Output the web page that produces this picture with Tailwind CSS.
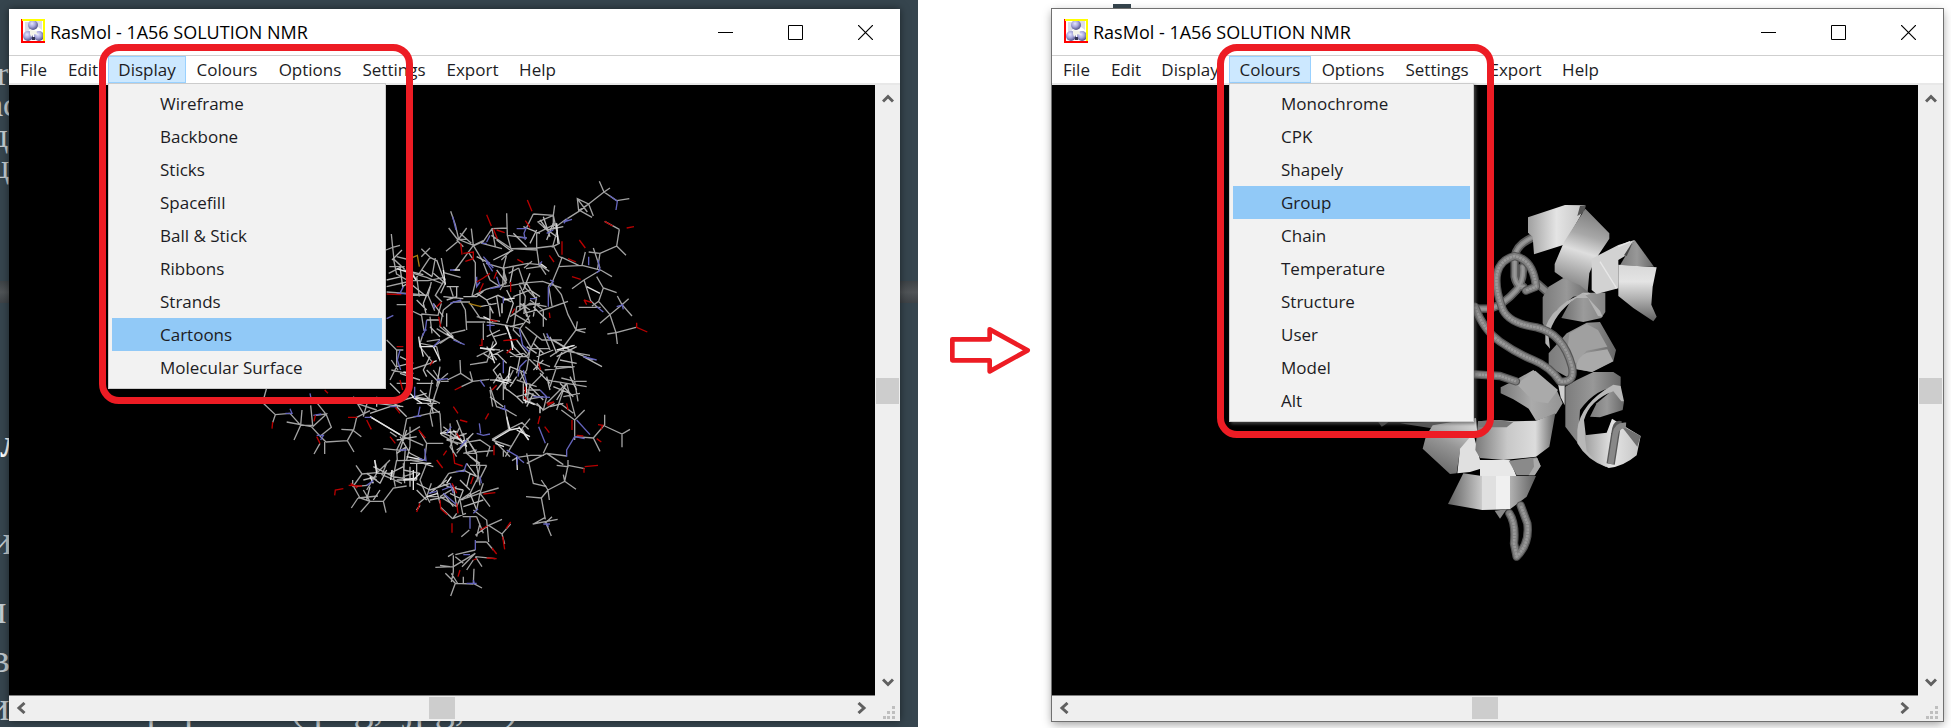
<!DOCTYPE html>
<html lang="en">
<head>
<meta charset="utf-8">
<title>RasMol</title>
<script src="https://cdn.jsdelivr.net/npm/@tailwindcss/browser@4"></script>
</head>
<body class="bg-white font-['Open_Sans','Noto_Sans',sans-serif] text-black">
<svg class="absolute size-0" aria-hidden="true">
  <defs>
    <radialGradient id="ball" cx="0.4" cy="0.35" r="0.65"><stop offset="0" stop-color="#e4e4ff"/><stop offset="0.5" stop-color="#a8a8dc"/><stop offset="1" stop-color="#55558c"/></radialGradient>
    <symbol id="logo" viewBox="0 0 24 24">
      <rect width="24" height="24" fill="#fff"/>
      <path d="M4 3h6v6l-5 6h-1zM16 2l5 0v9l-4-3z" fill="#dcdce8"/>
      <circle cx="12" cy="6" r="5" fill="url(#ball)"/>
      <circle cx="7" cy="17" r="5" fill="url(#ball)"/>
      <circle cx="18" cy="17" r="5" fill="url(#ball)"/>
      <path d="M9 11l6 1 2 4-4-1-3 3-1-3z" fill="#f4f4e8"/>
      <path d="M11 18h3v3h-3z" fill="#333350"/>
      <path d="M1 0V23H24" fill="none" stroke="#f00" stroke-width="2"/>
      <path d="M1 1H23V22" fill="none" stroke="#ff0" stroke-width="2"/>
    </symbol>
    <symbol id="chev-up" viewBox="0 0 12 10"><path d="M1 7.500L6 2.500l5 5" fill="none" stroke="#606060" stroke-width="3"/></symbol>
    <symbol id="chev-down" viewBox="0 0 12 10"><path d="M1 2.500L6 7.500l5-5" fill="none" stroke="#606060" stroke-width="3"/></symbol>
    <symbol id="chev-left" viewBox="0 0 10 12"><path d="M8.500 1L3 6l5.500 5" fill="none" stroke="#606060" stroke-width="3"/></symbol>
    <symbol id="chev-right" viewBox="0 0 10 12"><path d="M1.500 1L7 6l-5.500 5" fill="none" stroke="#606060" stroke-width="3"/></symbol>
    <symbol id="grip" viewBox="0 0 13 13"><path d="M9 0h3v3H9zM4 5h3v3H4zM9 5h3v3H9zM0 10h3v3H0zM4 10h3v3H4zM9 10h3v3H9z" fill="#bfbfbf"/></symbol>
    <symbol id="win-min" viewBox="0 0 15 15"><path d="M0 7.500h15" stroke="#000"/></symbol>
    <symbol id="win-max" viewBox="0 0 15 15"><path d="M.5.5h14v14H.5z" fill="none" stroke="#000"/></symbol>
    <symbol id="win-close" viewBox="0 0 15 15"><path d="M0 0l15 15M15 0L0 15" stroke="#000" stroke-width="1.200"/></symbol>
    <linearGradient id="g1"><stop offset="0" stop-color="#a0a0a0"/><stop offset=".5" stop-color="#e4e4e4"/><stop offset="1" stop-color="#c4c4c4"/></linearGradient>
    <linearGradient id="g2" x1=".6" y1="0" x2=".4" y2="1"><stop offset="0" stop-color="#7c7c7c"/><stop offset=".3" stop-color="#a8a8a8"/><stop offset=".5" stop-color="#dedede"/><stop offset="1" stop-color="#747474"/></linearGradient>
    <linearGradient id="g3" x1="0" y1="0" x2="0" y2="1"><stop offset="0" stop-color="#d8d8d8"/><stop offset=".3" stop-color="#e4e4e4"/><stop offset=".6" stop-color="#b0b0b0"/><stop offset="1" stop-color="#606060"/></linearGradient>
    <linearGradient id="g4"><stop offset="0" stop-color="#7c7c7c"/><stop offset=".5" stop-color="#989898"/><stop offset="1" stop-color="#686868"/></linearGradient>
    <linearGradient id="g5"><stop offset="0" stop-color="#7a7a7a"/><stop offset=".4" stop-color="#c8c8c8"/><stop offset=".75" stop-color="#dcdcdc"/><stop offset="1" stop-color="#666"/></linearGradient>
    <linearGradient id="g6"><stop offset="0" stop-color="#606060"/><stop offset=".38" stop-color="#c8c8c8"/><stop offset=".39" stop-color="#e0e0e0"/><stop offset=".54" stop-color="#e0e0e0"/><stop offset=".55" stop-color="#f0f0f0"/><stop offset=".7" stop-color="#f0f0f0"/><stop offset=".71" stop-color="#b0b0b0"/><stop offset="1" stop-color="#606060"/></linearGradient>
    <linearGradient id="g7" x1=".8" y1="0" x2=".3" y2="1"><stop offset="0" stop-color="#dcdcdc"/><stop offset=".5" stop-color="#969696"/><stop offset="1" stop-color="#666"/></linearGradient>
  </defs>
</svg>

<main class="grid h-screen grid-cols-[918fr_134fr_899fr] overflow-hidden">

  <!-- Left: wireframe view with the Display menu open -->
  <section class="relative mb-[2px] flex bg-[#36454e] pt-[9px] pr-[18px] pb-[6px] pl-[9px]">
    <div class="absolute inset-x-0 top-[281px] h-[22px] bg-gradient-to-b from-[#3e4347] via-[#505457] to-[#3e4347]"></div>
    <div class="absolute inset-0 overflow-hidden font-['Liberation_Serif',serif] text-[34px] leading-10 text-[#c4ccd0]" aria-hidden="true">
      <span class="absolute top-[54px] -left-[3px]">r</span>
      <span class="absolute top-[85px] -left-[12px]">ас</span>
      <span class="absolute top-[116px] -left-[9px]">д</span>
      <span class="absolute top-[147px] -left-[9px]">ц</span>
      <span class="absolute top-[424px] left-0 text-[40px] font-bold text-white">л</span>
      <span class="absolute top-[521px] -left-[9px] text-[40px]">и</span>
      <span class="absolute top-[590px] -left-[15px] text-[40px]">п</span>
      <span class="absolute top-[639px] -left-[9px] text-[40px]">в</span>
      <span class="absolute top-[687px] -left-[12px] text-[40px] whitespace-nowrap">ическом формате (.png, .jpg, ...)</span>
    </div>

    <div class="relative flex min-w-0 flex-1 flex-col bg-white shadow-[0_0_8px_rgba(0,0,0,0.5)]">
      <header class="flex h-[46px] shrink-0 items-center pl-3">
        <svg class="mt-[-2px] size-6"><use href="#logo"/></svg>
        <h1 class="ml-[5px] flex-1 text-[18px] leading-6">RasMol - 1A56 SOLUTION NMR</h1>
        <button class="flex h-full w-[70px] items-center justify-center" aria-label="Minimize"><svg class="size-[15px]"><use href="#win-min"/></svg></button>
        <button class="flex h-full w-[70px] items-center justify-center" aria-label="Maximize"><svg class="size-[15px]"><use href="#win-max"/></svg></button>
        <button class="flex h-full w-[70px] items-center justify-center" aria-label="Close"><svg class="size-[15px]"><use href="#win-close"/></svg></button>
      </header>
      <nav class="relative flex h-[30px] shrink-0 items-start border-t border-b-2 border-t-[#cfcfcf] border-b-[#e8e8e8] text-[17px] leading-[26px] text-[#1c1c24]">
        <button class="h-[27px] w-[49px]">File</button>
        <button class="h-[27px] w-[50px]">Edit</button>
        <div class="relative">
          <button class="h-[27px] w-[78px] border border-[#99d1ff] bg-[#cce8ff] leading-6" aria-expanded="true">Display</button>
          <ul class="absolute top-[27px] left-0 z-10 w-[278px] border border-[#ccc] bg-[#f2f2f2] px-[3px] pt-[3px] pb-1">
            <li><button class="h-[33px] w-full pl-12 text-left">Wireframe</button></li>
            <li><button class="h-[33px] w-full pl-12 text-left">Backbone</button></li>
            <li><button class="h-[33px] w-full pl-12 text-left">Sticks</button></li>
            <li><button class="h-[33px] w-full pl-12 text-left">Spacefill</button></li>
            <li><button class="h-[33px] w-full pl-12 text-left">Ball &amp; Stick</button></li>
            <li><button class="h-[33px] w-full pl-12 text-left">Ribbons</button></li>
            <li><button class="h-[33px] w-full pl-12 text-left">Strands</button></li>
            <li><button class="h-[33px] w-full bg-[#91c9f7] pl-12 text-left">Cartoons</button></li>
            <li><button class="h-[33px] w-full pl-12 text-left">Molecular Surface</button></li>
          </ul>
        </div>
        <button class="h-[27px] w-[82px]">Colours</button>
        <button class="h-[27px] w-[84px]">Options</button>
        <button class="h-[27px] w-[84px]">Settings</button>
        <button class="h-[27px] w-[73px]">Export</button>
        <button class="h-[27px] w-[57px]">Help</button>
      </nav>
      <div class="flex min-h-0 flex-1">
        <svg class="min-w-0 flex-1 border-b border-[#808080] bg-black" viewBox="0 0 866 610" preserveAspectRatio="xMidYMid meet" role="img" aria-label="Wireframe model">
          <g transform="translate(221 85) scale(.33333)" fill="none" stroke-width="4">
            <path stroke="#a2a2a2" d="M1108 34l14 32 18-12M1122 66l38 26M1122 66l-46 36-34-16 4 36 30-20 14 36M1076 102l-26 20 36 20M1042 86l30 40M1160 92l38-6M1050 122l-38 24M1168 178l-8 50-50 22M1160 228l28 28M1168 178l-44-24M1110 250l-34-4M1110 250l-8 50M1090 234l20 60M1066 246l-10 40-70 4M1056 286l56 14 34 20M1112 300l-50 30-36 26M1062 330l20 62 20 20M1100 320l20 34 40 14M1120 354l-14 40-20 14M1106 394l34 40 36-30M1046 412l66 0M1140 434l-30 26M1140 434l18 54 60-16M1158 488l4 34M1158 488l-26 4M1176 404l30 34M1176 404l-14-26M1176 404l20-18
              M910 132l60 4 0 40 40-30M970 136l4-30M970 136l-46 20 34 30M910 132l-20 40M970 136l18 84-20 10 14-50M920 190l0 50-76-4-60-40M920 190l60-30M830 130l2 66 12 44-30 30M832 174l-46 2-30 44 60 16M832 196l58 8M786 176l10 54M844 236l76-2 50-6M920 234l8 56-40 6M970 228l16 30 10 6M928 284l-34-4-72 14 4 50M928 284l30 20M928 284l20 30M986 290l-20 48-10 10 10 60M986 290l10-28 50 24M966 338l28 36 20 60 24 46-40 54M994 354l-56-20-70 6M1014 394l-56 20-30 10M1038 480l30-4M1038 480l28 8M1038 480l4-26
              M662 124l14 40 10 44 24 0M686 208l44 18 30-14M656 174l28 36M648 244l36-30M710 174l-26 36M730 226l-6-50M730 226l-54 74M730 226l30 50M690 190l34 30M700 230l-20-20M716 248l20 30 0 60-10 40M760 214l-30 14M768 280l50 14 12 36-20 30M822 294l-4 50-50 14-40 20M760 280l20 50 30 20M820 294l10-40M866 294l20 60 30 30M836 310l30-16M866 340l20 40-4 50M820 350l60-10M882 294l24-20
              M484 192l4 40-20 8M488 232l22-6M488 232l4 36 32 30M478 290l46 0M490 264l10 50M476 310l40-20M500 312l34 20 60 0 50-10M600 234l-26 26M574 236l26 26M600 262l-40 60M600 262l20 10M634 264l8 44 50 14M606 320l10-56M560 320l8 60M530 330l0 40M470 350l60-14M470 366l80 6 44 4M594 376l20 46M594 376l-50 0M594 376l10-40M550 310l40 12 50 20M646 326l-30 50 20 20M560 330l-30-44M500 260l40 10M530 404l-30 0M574 432l50 4 10-36M574 432l8 50M540 420l34 16M640 420l-10 50 24 20 6 14M640 420l30-24 50 0M670 380l-10-30M690 390l16 30 4 60M710 456l56 0M720 400l30 44 60 10M706 480l-44 10M660 500l34 20M660 500l-46 26M660 500l-30 20M660 500l-40-24M600 440l6 50M580 490l-10 30 50 10M620 530l10 44M570 530l40 50M590 514l40-6
              M470 510l30 30 0 50-20 40M500 540l20 0M484 600l46 10M484 570l20 30M500 640l46 0M540 600l60-20M610 600l20 30 24-20M630 630l-20 60 20 10M606 630l-10 60M632 634l24 0M690 570l2 40 36 24 50-6M692 610l-40 20M728 634l-34 16M728 634l-8-30M780 630l40 0M780 650l20 60 26 8M790 640l20-30M780 660l8 50
              M740 560l40-20M720 584l50-8M750 534l60 6M790 514l-20 64M780 480l20 40M770 456l60 10 20 66M740 440l60 14M760 460l0 50M830 466l40 10 34 60M870 476l30-40M900 536l60 0M860 410l-10 70 20 20M850 430l50 30M840 440l60-40 50 10M880 400l20 60M900 390l40 30 0 50M930 400l-70 10M886 470l50 40 60 0M940 490l20 50M920 500l-30 60M950 500l50 30 40 20M960 560l30-20 90 16M1000 536l30-10M1004 530l-30 60 50 0M980 590l-20 60M960 590l-50-20M1020 540l14 90M1034 590l-90 10M1034 634l-40-10M1034 634l36 0M1034 634l10 60M1010 640l-60-10M1010 640l60 10M1010 640l-60 60M1010 640l26 100M1000 660l-20 60M1000 680l50-10M990 700l40 30M1034 750l30-30M1034 750l0 60M1034 750l-40-30M1090 804l34-40 0-30M1090 804l20 40M1090 804l-56-4M1124 768l52 24 24-14M1176 792l0 40
              M900 540l-10 60-20 30M880 550l60 60-40 40M860 630l60 20M900 640l-10 60M930 660l-40 0M940 680l-60 10M890 690l40 20M950 680l-10 40 34-20M820 630l0 60M850 600l-30 60
              M826 718l34 20M826 718l10 60 40-20 20 20M836 778l-50 30M876 776l-30 50-20 34M876 776l24-30M876 776l20 34M846 830l-60-20M790 810l50 50M820 860l0-20M862 862l-16 10M862 862l40-6 40 0M890 850l20 90 40 10M950 850l-60 30M950 850l60 8M950 850l50 34M940 850l14-30M1014 870l0 20-34-4M1014 886l-10 48-50 26M1014 886l50 10M1004 934l34 24M1004 934l-4-20M954 960l4 30M954 960l-20 24-46-4M954 960l-20-30M934 984l12 64M908 1062l75-14M948 1060l16 38M910 1062l36-20M966 1040l-20 20
              M100 700l36 34 44-4M100 690l10-36M136 734l-8 24M180 730l32 36-20 44M212 766l36 0-6-60M170 756l74 14M212 766l4-46M244 770l28 30 16 16M288 732l16 40-30 24M288 732l-30 4M262 700l24 30M248 770l44-40M288 816l64-4 20 34M352 812l20-36 8-34M368 780l-34-2M368 780l26 20M284 816l0 36M270 820l-18 32M380 742l40-20M400 730l-30-50M420 740l100 60M400 740l14-50M380 700l60 20M530 746l70-16 30-6M530 746l-10 50M600 730l8 40M600 730l14-50M520 800l-20 40 2 32 82-2M520 800l60 26M520 800l50-30M540 770l0 60M500 800l-20-14M460 836l60 6M526 834l-6 90M584 870l6-50 50 0M590 820l-20-34M630 730l4 64 50 30M650 780l-16 10M660 760l4 60M680 750l20 50M690 770l-30 60 20 30M690 820l60-10 30 20-10 30M690 820l-40-10M700 850l40-10M740 850l-30 0 40 36-10 50M740 846l50-4M710 804l30 50 0 40M720 800l-40 50
              M396 912l44-4M396 912l-26 36 20 36 30 10M396 912l-18-26M434 870l10 40 46 0M480 870l-40 40M440 910l-30 50M470 880l-14 34 60 26M368 950l44-4M368 950l0-20M420 994l40 0 30-40 40-6M460 994l8 34M420 994l-28 32M384 984l-20 30M384 984l60-6M400 960l20 34M486 900l10 50M500 870l-10 50 60 10M520 920l30-10M524 940l-4-60M590 880l-20 50 20 50 34 0M590 880l-50-10M590 980l-24 20M590 980l14-40M590 980l10 18M630 980l50-30M630 980l50 30M656 910l-20 30 20 10M656 910l50-10M740 930l-20 40M740 886l10 60M770 886l-50 0M770 886l-20 40M750 970l-60 20M750 970l56-16M750 970l30 40M750 970l-10 50M750 970l10-30M690 990l10 50 40 0M690 990l30-20M680 1030l-10 14M668 1046l40-16M668 1046l-36-34M730 1020l40 30 6 66M776 1066l40-18M776 1066l-40 30M776 1066l40 26 26-30M816 1092l8 30M770 1116l-34 0M770 1116l20 24M718 1080l-24 20M740 1040l20 50M740 1100l10-40M736 1140l-60 14M736 1150l-40 40M736 1160l60 6M670 1156l0 50-6 30M670 1190l66-40M670 1190l-54 2M670 1150l-16 10M660 1190l-30-4M676 1240l54 2M676 1240l-14 38M676 1240l-30-30M730 1240l2-44M730 1240l26 14M664 1210l20 32M736 1160l20 30M730 1170l-20 30M676 1160l24 20M700 1240l0-20"/>
            <path stroke="#b4b4b4" d="M470 330l44-10M510 290l8 60 30-20M486 270l30-30M520 300l60 14M540 340l50 40M576 300l30 20M620 270l22 60M610 310l36 30-14 30M650 350l36 0M680 350l0 30-30 10M640 380l60 6M600 350l-20 50 8 30M560 390l30 30M610 400l30 40M590 450l40 0M600 470l30 30M640 470l30 30M650 430l0 40M700 380l40 0 20-16M740 370l30 20 20 40M770 390l34-14 40 20M780 400l0 60M750 410l50-10M800 380l10 60M830 360l20 40-20 60M850 380l50-20 30 20M870 360l0 60M890 340l30 50M900 310l-20 50M850 290l-10 50M800 300l30 40M790 270l60-30M740 260l40 20M800 210l40 30M850 190l40 40M880 170l50 20M930 150l30 40M940 170l40 30M950 210l20-50M940 140l20 60M1000 170l-50 10M900 220l20-40
              M880 430l40-10 20 20M890 440l-10-40M910 410l40 40M920 380l-10 60M870 400l30 20M840 470l40-10M810 480l-40 20M790 500l40-10M770 530l30 40M780 560l40-20M760 550l30 20M800 550l30 30M810 580l-20 20 20 30M830 540l30 20 30 0M850 530l30 30M860 510l30 40M840 560l40-10M870 560l-10 50M890 530l30 20M910 520l30 30M920 560l50-20M930 540l-10 60M940 570l-30 30M960 500l20 50M970 510l50 30M980 560l60-30M1060 560l56 30M1040 550l50 20M990 570l50 10M950 620l10 40M930 610l30 30M970 650l50 20M1020 620l20 40M990 640l40 40M980 690l30-50M960 710l40-10
              M800 620l50 20M810 610l20 50M840 610l-40 50M860 620l-20 30M870 600l20 50M880 640l0 50M860 680l40-10M900 650l40 40M910 670l-20 40M920 700l20 20M880 660l40 20M840 590l50 20M820 650l40 30 20 20M780 680l40 30
              M510 560l40 20M500 590l40-10M540 560l0 60M510 610l60 20M560 640l50 0M570 660l30 30 10 40M550 680l60 10M520 690l70-20M590 700l40 30M560 700l60 0M480 640l30 30M470 690l40 20M440 700l80 10M420 730l60-20M500 710l30 30M440 680l0 30M620 650l10-60M590 600l40 40M600 560l-20 40 10 20
              M640 790l50 20M650 810l60-20M660 800l10 50M670 780l40 50M680 840l30-20M700 790l10 60M720 820l20 30M730 790l-30 30M640 770l50 40M720 860l30 20M710 880l30 40M700 900l40 20M720 910l-10 40M690 930l30 30M650 950l50 10M640 970l30 40M660 970l40 20M670 950l10 60M700 960l-20 50M710 980l40-20M720 970l20 50M700 1010l60-20M650 930l-50 40M600 960l60-20M620 960l10 40M600 990l50-10M560 960l30 30M560 940l40 20M540 890l0 60M560 880l0 50M520 900l50 10M500 930l60 0M480 910l40-20M470 900l-20 40M430 890l60 30M440 930l-30-20M410 910l40 30M420 950l-10 40M450 960l-20 30M400 930l40-10M510 800l30 50 40 20M530 780l-20 60M560 800l-60 10M500 850l30-20M530 870l10-40M540 880l60 0M580 880l30 10"/>
            <path stroke="#e4e4e4" d="M500 296l44 14 14 20M640 300l6 44M566 500l4 30 46 0M570 520l10 40M600 580l20-8M540 670l14 14 50 10M520 606l30 4M546 680l30 20M820 390l34-6M816 400l0 30M800 520l-20 20 14 40M750 534l44 6M830 470l20 60M820 630l24 0M840 590l-6 40M836 640l-40-10M830 740l10 40M790 810l50-30 30-6M796 820l26 10M630 790l50-6M680 800l20 20M434 870l6 40M486 900l-4 30M550 900l0 60M520 930l40-6M420 920l10 20M590 880l14 0M570 910l-20 20M560 1020l10-14M590 980l34-10M980 160l4 60M930 280l20 14M980 540l54-14M880 690l34 14M860 860l2 40M930 710l0 20M760 440l30 14M1070 350l40 20M700 810l10 20M670 300l20 0M664 920l-14 20M866 770l30 40M860 780l40 20M650 490l20 14M610 530l20 40M780 540l10 30M826 466l14 30M842 500l6 40M890 640l-4 60M420 740l90 54M530 860l50 10"/>
            <path stroke="#6464bc" d="M1140 78l22 16-4 26M1012 146l-10 14M1000 156l26-8M950 190l20-10M890 204l-20-2M890 170l-8 20 4 20M860 176l26 0M770 216l10-20M756 220l14 0M668 140l10 40M1110 300l-10 8M1076 286l0-26M1110 300l-6-30M960 330l10 4-10 16M955 350l0 60M928 284l8-10M740 320l0 30 10-14M768 274l20 30M800 320l10 30-30 6M760 260l30 34M660 300l14 0M610 400l4 16M520 350l-10 20M470 446l20-10M590 450l-4 30-10 20M580 480l10 0M610 530l20-20M670 510l34 14M660 400l34-10M500 370l50 2M510 540l-8 30 10 30M620 630l34-4M554 650l0 34M770 466l24 0M780 460l0 20M820 380l0 20M900 386l20 0M868 476l10 50 20 20M890 570l-20 20-6 30M820 570l0 40M880 600l10 40M910 680l50 2M930 660l20 20M950 490l10 20M1060 560l40 10M1180 404l-20 6M1176 404l4 14M1100 410l20 16M750 630l14 20M824 720l0-14M810 714l20 6M926 770l20 50M1034 800l30 6M1034 800l-24 40 0 20M1040 750l40 44M862 862l20 16M862 860l0 24M940 1062l20 0M948 1060l8 10M166 730l20 0-6-14M240 670l4 20M260 796l20 0-8 14M250 736l24-4M404 742l20 0M480 710l20 0M564 740l6-30M550 740l24-2M510 840l20 0M584 836l4 36-20-6M650 790l14-20M740 790l20 6 20-4M752 790l-4-30M706 890l-4 14-24 0M706 890l4-10M636 960l36-14M640 970l40 34M660 940l10 30M750 920l4 20M730 1030l14-14M720 1040l0 36M736 1110l0 30M700 1154l20 0M710 1240l30 0M730 1230l4 14M410 946l20-14M596 970l24-6M690 830l20-20M830 840l34 20"/>
            <path stroke="#b80000" d="M892 90l14 34M886 152l14 20M770 134l14 34M790 176l12 30M800 180l24 8M692 220l4 34M700 250l30-4 0 20-24 8M1124 154l24 14M1190 174l22-4M1048 210l18 24M996 214l0 40M958 256l14 20M1014 266l24 10M1026 320l26 8M1062 390l24 8M1070 404l-8-14M1220 458l0 14 32 14M958 428l2 16M862 268l18 10M842 336l0 30M780 310l-20 14-20 12M760 340l-12 26M800 306l-8 20M620 410l14-14M626 440l6 30M470 372l44 2M500 530l20 0M600 586l10-14M510 630l8 30M674 660l20-10M786 660l14-14M780 450l22 4M756 506l0 20-8 0M820 512l42-4M830 550l14-14M846 430l8-14M926 580l6 20M886 650l0 20M884 680l6 10M930 738l-6 24M950 700l22-4-20 10M944 770l14 18M1010 700l4 20M1026 750l0 30M1040 796l20 2M1100 806l14 10M1104 764l14 2-6 12M1064 890l40-4M1062 894l0 14M670 710l14 20M690 750l22 6M776 730l-10 18M792 826l0 30M640 856l10-14M670 850l4 30 24 8M680 790l10 14M566 780l20 24M480 800l16 20M620 870l18 24M496 712l14 18M410 750l14 28M354 742l28 0M284 660l10 10M256 736l-4 18M260 800l10 20M128 756l-2 20M314 976l2-16 24-4M356 946l40 2M362 940l20 14M570 1000l-10 26M630 990l2 26 20 18M680 1000l4 30M666 1060l0 28M730 920l-8 22M760 972l36-4M666 940l14 30M750 1080l22-12M842 1056l-14 20M818 1100l6 38M786 1134l14 18M770 1164l30 2M690 1200l-6 20M730 1170l10-4"/>
            <path stroke="#a87c10" d="M548 262l14-6 6 34M716 400l22 6 16 4"/>
          </g>
        </svg>
        <div class="flex w-[25px] shrink-0 flex-col items-center bg-[#efefef] px-px pt-[5px] pb-[5px]">
          <button class="p-1" aria-label="Scroll up"><svg class="h-[10px] w-3"><use href="#chev-up"/></svg></button>
          <div class="flex w-full flex-1 flex-col justify-center"><div class="h-[26px] bg-[#cdcdcd]"></div></div>
          <button class="p-1" aria-label="Scroll down"><svg class="h-[10px] w-3"><use href="#chev-down"/></svg></button>
        </div>
      </div>
      <div class="flex h-[25px] shrink-0 items-center bg-[#efefef] pr-1 pb-px pl-[3px]">
        <button class="p-1" aria-label="Scroll left"><svg class="h-3 w-[10px]"><use href="#chev-left"/></svg></button>
        <div class="flex h-full flex-1 justify-center py-px"><div class="w-[26px] bg-[#cdcdcd]"></div></div>
        <button class="p-1" aria-label="Scroll right"><svg class="h-3 w-[10px]"><use href="#chev-right"/></svg></button>
        <svg class="mt-2 ml-3 size-[13px]"><use href="#grip"/></svg>
      </div>
    </div>
    <div class="pointer-events-none absolute top-[44px] left-[99px] z-20 h-[360px] w-[314px] rounded-[20px] border-[7px] border-[#ed1c24]"></div>
  </section>

  <!-- Arrow between the two steps -->
  <div class="flex items-center justify-center pb-[28px] pl-3">
    <svg class="h-[70px] w-[110px]" viewBox="0 0 330 210" role="img" aria-label="Next step"><path d="M49 70H161V40L275 103 161 166V133H49Z" fill="#fff" stroke="#ed1c24" stroke-width="14" stroke-linejoin="round"/></svg>
  </div>

  <!-- Right: cartoon view with the Colours menu open -->
  <section class="relative flex pt-[9px] pr-[8px] pb-[8px]">
    <div class="absolute top-1 left-[61px] h-[5px] w-[18px] bg-[#36454e]"></div>
    <div class="relative flex min-w-0 flex-1 flex-col bg-white shadow-[0_0_0_1px_#707070,0_3px_9px_rgba(0,0,0,0.4)]">
      <header class="flex h-[46px] shrink-0 items-center pl-3">
        <svg class="mt-[-2px] size-6"><use href="#logo"/></svg>
        <h1 class="ml-[5px] flex-1 text-[18px] leading-6">RasMol - 1A56 SOLUTION NMR</h1>
        <button class="flex h-full w-[70px] items-center justify-center" aria-label="Minimize"><svg class="size-[15px]"><use href="#win-min"/></svg></button>
        <button class="flex h-full w-[70px] items-center justify-center" aria-label="Maximize"><svg class="size-[15px]"><use href="#win-max"/></svg></button>
        <button class="flex h-full w-[70px] items-center justify-center" aria-label="Close"><svg class="size-[15px]"><use href="#win-close"/></svg></button>
      </header>
      <nav class="relative flex h-[30px] shrink-0 items-start border-t border-b-2 border-t-[#cfcfcf] border-b-[#e8e8e8] text-[17px] leading-[26px] text-[#1c1c24]">
        <button class="h-[27px] w-[49px]">File</button>
        <button class="h-[27px] w-[50px]">Edit</button>
        <button class="h-[27px] w-[78px]">Display</button>
        <div class="relative">
          <button class="h-[27px] w-[82px] border border-[#99d1ff] bg-[#cce8ff] leading-6" aria-expanded="true">Colours</button>
          <ul class="absolute top-[27px] left-0 z-10 w-[245px] border border-[#ccc] bg-[#f2f2f2] px-[3px] pt-[3px] pb-1 shadow-[2px_2px_3px_rgba(90,90,90,0.7)]">
            <li><button class="h-[33px] w-full pl-12 text-left">Monochrome</button></li>
            <li><button class="h-[33px] w-full pl-12 text-left">CPK</button></li>
            <li><button class="h-[33px] w-full pl-12 text-left">Shapely</button></li>
            <li><button class="h-[33px] w-full bg-[#91c9f7] pl-12 text-left">Group</button></li>
            <li><button class="h-[33px] w-full pl-12 text-left">Chain</button></li>
            <li><button class="h-[33px] w-full pl-12 text-left">Temperature</button></li>
            <li><button class="h-[33px] w-full pl-12 text-left">Structure</button></li>
            <li><button class="h-[33px] w-full pl-12 text-left">User</button></li>
            <li><button class="h-[33px] w-full pl-12 text-left">Model</button></li>
            <li><button class="h-[33px] w-full pl-12 text-left">Alt</button></li>
          </ul>
        </div>
        <button class="h-[27px] w-[84px]">Options</button>
        <button class="h-[27px] w-[84px]">Settings</button>
        <button class="h-[27px] w-[73px]">Export</button>
        <button class="h-[27px] w-[57px]">Help</button>
      </nav>
      <div class="flex min-h-0 flex-1">
        <svg class="min-w-0 flex-1 border-b border-[#808080] bg-black" viewBox="0 0 866 610" preserveAspectRatio="xMidYMid meet" role="img" aria-label="Cartoon model">
          <g transform="translate(348 105) scale(.33333)">
            <!-- back coils -->
            <g fill="none" stroke-linecap="round" stroke-linejoin="round">
              <path d="M408 138Q350 160 344 200V260Q350 290 370 290M368 230Q372 270 350 300Q310 345 270 356H225M412 280L440 305" stroke="#585858" stroke-width="25"/>
              <path d="M408 138Q350 160 344 200V260Q350 290 370 290M368 230Q372 270 350 300Q310 345 270 356H225M412 280L440 305" stroke="#888" stroke-width="15"/>
              <path d="M408 138Q350 160 344 200V260Q350 290 370 290M368 230Q372 270 350 300Q310 345 270 356H225" stroke="#999" stroke-width="6"/>
            </g>
            <!-- upper right helix -->
            <path d="M384 82L495 45 555 46 540 80 492 164 402 193 398 140 384 128Z" fill="url(#g1)"/>
            <path d="M540 48L558 46 552 66 532 78Z" fill="#555"/>
            <path d="M556 56L628 130V146L584 212 568 250 562 316 464 246V222L492 156Z" fill="url(#g2)"/>
            <path d="M575 206L655 165 704 150 680 195 655 210V295L590 312 575 300Z" fill="#d2d2d2"/>
            <path d="M600 215L650 295M655 170L690 155" stroke="#e8e8e8" stroke-width="4"/>
            <path d="M704 150L762 230 660 226Z" fill="url(#g4)"/>
            <path d="M672 196L700 152 690 176 680 198Z" fill="#444"/>
            <path d="M655 224L770 232 758 290 754 344 770 380 760 394 700 354 655 318Z" fill="url(#g3)"/>
            <!-- middle helix turns -->
            <path d="M428 322L446 290 490 264 540 286 572 312 520 320 470 360 436 414 428 400Z" fill="url(#g4)"/>
            <path d="M484 384L508 340 548 308H616V366L604 384 550 396Z" fill="url(#g1)" opacity=".68"/>
            <path d="M436 412Q450 370 500 334L550 308 600 362 608 380 594 378 564 324 530 324Q460 370 446 440L450 476 436 460Z" fill="#b4b4b4"/>
            <path d="M446 490L500 430 560 398 600 396 648 480 640 514 576 546 528 538 500 560 446 530Z" fill="url(#g4)"/>
            <path d="M508 430L560 402 594 420 622 470 560 482 528 520 500 500Z" fill="#a0a0a0"/>
            <path d="M528 536Q530 500 560 488L622 478 640 514 576 546Z" fill="#aaa"/>
            <path d="M474 582L494 584V646L482 622Z" fill="#d0d0d0"/>
            <path d="M496 590L530 570 580 546 640 546 662 560V590Q590 590 540 660L534 760 496 710Z" fill="url(#g4)"/>
            <path d="M570 680L590 640 650 590 672 635 668 660 600 682Z" fill="url(#g4)"/>
            <path d="M662 588L640 584Q540 640 532 720V760Q560 810 620 832L560 760 552 690Q570 630 640 604L664 634 672 634Z" fill="#b8b8b8"/>
            <path d="M554 736L620 728 636 686 722 738 710 796Q670 830 626 834 590 820 560 784Z" fill="url(#g1)"/>
            <path d="M660 704L722 738 712 770 676 724Z" fill="#707070"/>
            <path d="M632 822L646 732Q650 700 660 706" stroke="#585858" stroke-width="25" fill="none"/>
            <path d="M632 822L646 732Q650 704 678 706" stroke="#888" stroke-width="17" fill="none"/>
            <!-- lower left helix turns -->
            <path d="M302 592L346 570 400 540 470 600 488 640 468 672 408 692 386 656 340 628 302 610Z" fill="url(#g1)" opacity=".75"/>
            <path d="M350 582L406 542 474 600 444 640 400 634Z" fill="#aaa"/>
            <path d="M0 700L222 690 226 708 90 714Z" fill="#555"/>
            <path d="M78 738L98 706 228 684 232 730 180 780 170 850 150 852 68 776Z" fill="url(#g7)"/>
            <path d="M172 850L180 776 220 730 240 810 242 836 210 846Z" fill="#e0e0e0"/>
            <path d="M234 694L290 690 340 694 408 692 466 670 448 770 408 800 310 810 240 804 226 780Z" fill="url(#g5)"/>
            <path d="M234 694L290 690 340 696 320 712 236 712Z" fill="#777"/>
            <path d="M240 810H330L350 860H240Z" fill="#e8e8e8"/>
            <path d="M326 812L410 802 422 828 404 856H350Z" fill="#8a8a8a"/>
            <path d="M400 806L412 804 422 828 404 856H386L402 830Z" fill="#aaa"/>
            <path d="M190 850L246 858H408L380 920 330 958 246 960 144 942Z" fill="url(#g6)"/>
            <path d="M284 962L320 958 300 986Z" fill="#888"/>
            <!-- front coils -->
            <g fill="none" stroke-linecap="round" stroke-linejoin="round">
              <path d="M225 350Q250 420 300 455T400 510T480 574Q526 580 516 530Q490 430 410 412Q320 400 305 350Q260 220 344 198Q400 210 408 290L378 302M225 553L300 558 348 574M328 970Q348 1000 342 1060L350 1100Q390 1060 382 1000L362 946" stroke="#555" stroke-width="25"/>
              <path d="M225 350Q250 420 300 455T400 510T480 574Q526 580 516 530Q490 430 410 412Q320 400 305 350Q260 220 344 198Q400 210 408 290L378 302M225 553L300 558 348 574M328 970Q348 1000 342 1060L350 1100Q390 1060 382 1000L362 946" stroke="#7e7e7e" stroke-width="18"/>
              <path d="M225 350Q250 420 300 455T400 510T480 574Q526 580 516 530Q490 430 410 412Q320 400 305 350Q260 220 344 198Q400 210 408 290L378 302M225 553L300 558 348 574M328 970Q348 1000 342 1060L350 1100Q390 1060 382 1000L362 946" stroke="#999" stroke-width="8" stroke-linecap="butt" stroke-dasharray="8 2"/>
            </g>
            <path d="M-68 692H-30L-45 704-55 710Z" fill="#484848"/>
          </g>
        </svg>
        <div class="flex w-[25px] shrink-0 flex-col items-center bg-[#efefef] px-px pt-[5px] pb-[5px]">
          <button class="p-1" aria-label="Scroll up"><svg class="h-[10px] w-3"><use href="#chev-up"/></svg></button>
          <div class="flex w-full flex-1 flex-col justify-center"><div class="h-[26px] bg-[#cdcdcd]"></div></div>
          <button class="p-1" aria-label="Scroll down"><svg class="h-[10px] w-3"><use href="#chev-down"/></svg></button>
        </div>
      </div>
      <div class="flex h-[25px] shrink-0 items-center bg-[#efefef] pr-1 pb-px pl-[3px]">
        <button class="p-1" aria-label="Scroll left"><svg class="h-3 w-[10px]"><use href="#chev-left"/></svg></button>
        <div class="flex h-full flex-1 justify-center py-px"><div class="w-[26px] bg-[#cdcdcd]"></div></div>
        <button class="p-1" aria-label="Scroll right"><svg class="h-3 w-[10px]"><use href="#chev-right"/></svg></button>
        <svg class="mt-2 ml-3 size-[13px]"><use href="#grip"/></svg>
      </div>
    </div>
    <div class="pointer-events-none absolute top-[44px] left-[165px] z-20 h-[394px] w-[277px] rounded-[20px] border-[7px] border-[#ed1c24]"></div>
  </section>
</main>
</body>
</html>
